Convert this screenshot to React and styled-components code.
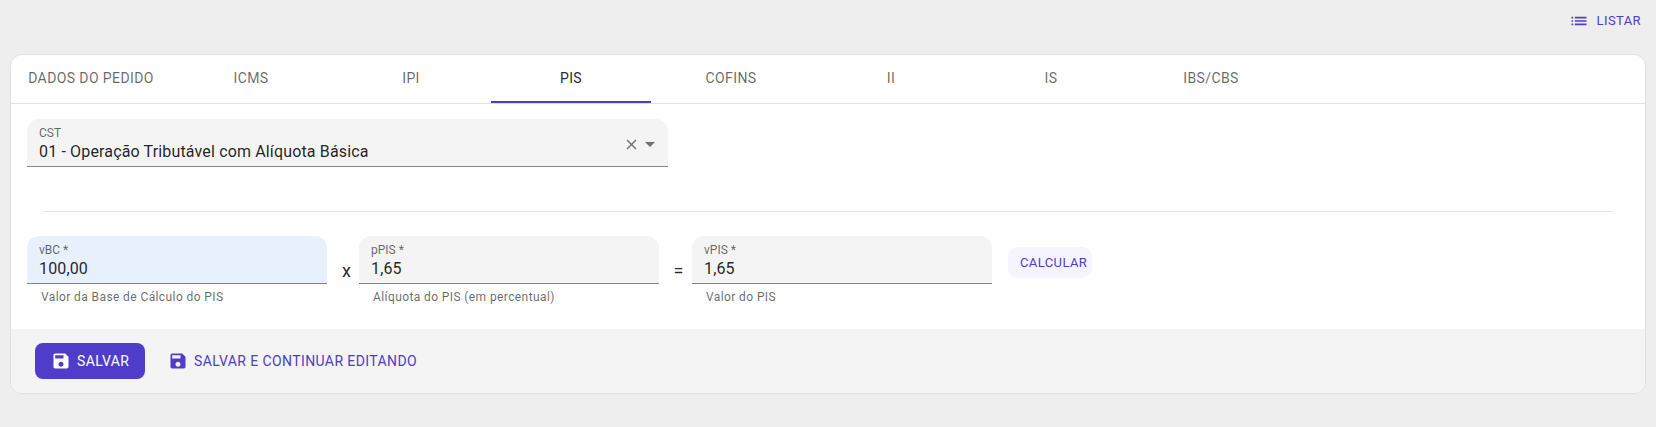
import React from 'react'
import styled, { createGlobalStyle } from 'styled-components'

const purple = '#4f3cc9'

const GlobalStyle = createGlobalStyle`
  html, body {
    margin: 0;
    background-color: #eeeeee;
    font-family: Roboto, "Liberation Sans", sans-serif;
  }
  * { box-sizing: border-box; }
`

const Page = styled.div`
  width: 1656px;
  height: 427px;
  padding: 0 10px 0 10px;
  overflow: hidden;
`

const TopBar = styled.div`
  height: 54px;
  display: flex;
  justify-content: flex-end;
  align-items: flex-start;
  padding: 9px 5px 0 0;
`

const TextButton = styled.div`
  display: flex;
  align-items: center;
  gap: ${props => props.$gap}px;
  color: ${purple};
  font-size: ${props => props.$size}px;
  line-height: 24px;
  letter-spacing: ${props => props.$spacing}px;
  text-transform: uppercase;
`

const Card = styled.div`
  width: 1636px;
  height: 340px;
  background-color: #fff;
  border: 1px solid #e0e0e0;
  border-radius: 12px;
  overflow: hidden;
  display: flex;
  flex-direction: column;
`

const TabBar = styled.div`
  height: 49px;
  flex-shrink: 0;
  display: flex;
  border-bottom: 1px solid #e0e0e0;
`

const Tab = styled.div`
  width: 160px;
  height: 48px;
  display: flex;
  align-items: center;
  justify-content: center;
  font-size: 14px;
  letter-spacing: 0.4px;
  text-transform: uppercase;
  color: ${props => (props.$active ? 'rgba(0,0,0,0.87)' : 'rgba(0,0,0,0.6)')};
  border-bottom: 2px solid ${props => (props.$active ? purple : 'transparent')};
`

const Body = styled.div`
  flex: 1;
  padding: 15px 16px 0 16px;
`

const Field = styled.div`
  width: ${props => props.$width}px;
  height: 48px;
  padding: 8px 12px 0 12px;
  background-color: ${props => (props.$focus ? '#e8f0fe' : '#f4f4f4')};
  border-bottom: 1px solid #858585;
  border-radius: 12px 12px 0 0;
  position: relative;
`

const Label = styled.div`
  font-size: 12px;
  line-height: 13px;
  color: rgba(0,0,0,0.6);
`

const Value = styled.div`
  font-size: 16px;
  line-height: 23px;
  letter-spacing: 0.15px;
  color: rgba(0,0,0,0.87);
`

const SelectIcons = styled.div`
  position: absolute;
  right: 6px;
  top: 13px;
  display: flex;
  align-items: center;
`

const ClearSlot = styled.span`
  display: flex;
  margin: 1px -2px 0 0;
`

const Divider = styled.div`
  height: 1px;
  margin: 44px 16px 24px 16px;
  background-color: #e0e0e0;
`

const CalcRow = styled.div`
  display: flex;
  align-items: flex-start;
`

const Operator = styled.div`
  width: ${props => props.$width}px;
  padding: 23px 0 0 ${props => props.$pad}px;
  text-align: center;
  font-size: 18px;
  line-height: 24px;
  color: rgba(0,0,0,0.87);
`

const Helper = styled.div`
  font-size: 12px;
  line-height: 16px;
  margin-top: 5px;
  padding-left: 14px;
  letter-spacing: 0.4px;
  color: rgba(0,0,0,0.6);
`

const CalcButton = styled.div`
  margin: 11px 0 0 16px;
  width: 84px;
  height: 31px;
  padding-left: 12px;
  display: flex;
  align-items: center;
  border-radius: 10px;
  background-color: #f6f5fd;
  color: ${purple};
  font-size: 13px;
  letter-spacing: 0.4px;
`

const Footer = styled.div`
  flex: 0 0 64px;
  padding: 14px 24px;
  background-color: #f4f4f4;
  display: flex;
  align-items: flex-start;
  gap: 23px;
`

const SaveButton = styled.div`
  width: 110px;
  height: 36px;
  padding-left: 16px;
  display: flex;
  align-items: center;
  gap: 6px;
  border-radius: 8px;
  background-color: ${purple};
  color: #fff;
  font-size: 14px;
  letter-spacing: 0.4px;
`

const SaveLink = styled(TextButton)`
  height: 36px;
`

const Save = () => (
  <svg width="20" height="20" viewBox="0 0 24 24" fill="currentColor">
    <path d="M17 3H5c-1.11 0-2 .9-2 2v14c0 1.1.89 2 2 2h14c1.1 0 2-.9 2-2V7l-4-4zm-5 16c-1.66 0-3-1.34-3-3s1.34-3 3-3 3 1.34 3 3-1.34 3-3 3zm3-10H5V5h10v4z" />
  </svg>
)

const ListIcon = () => (
  <svg width="20" height="20" viewBox="0 0 24 24" fill={purple}>
    <path d="M3 13h2v-2H3v2zm0 4h2v-2H3v2zm0-8h2V7H3v2zm4 4h14v-2H7v2zm0 4h14v-2H7v2zM7 7v2h14V7H7z" />
  </svg>
)

const CloseIcon = () => (
  <svg width="17" height="17" viewBox="0 0 24 24" fill="rgba(0,0,0,0.54)">
    <path d="M19 6.41 17.59 5 12 10.59 6.41 5 5 6.41 10.59 12 5 17.59 6.41 19 12 13.41 17.59 19 19 17.59 13.41 12z" />
  </svg>
)

const ArrowIcon = () => (
  <svg width="24" height="24" viewBox="0 0 24 24" fill="rgba(0,0,0,0.54)">
    <path d="M7 10l5 5 5-5z" />
  </svg>
)

const tabs = ['Dados do pedido', 'ICMS', 'IPI', 'PIS', 'COFINS', 'II', 'IS', 'IBS/CBS']

const App = () => (
  <Page>
    <GlobalStyle />
    <TopBar>
      <TextButton $size={13} $spacing={0.4} $gap={8}>
        <ListIcon />
        Listar
      </TextButton>
    </TopBar>
    <Card>
      <TabBar>
        {tabs.map(tab => <Tab key={tab} $active={tab === 'PIS'}>{tab}</Tab>)}
      </TabBar>
      <Body>
        <Field $width={641}>
          <Label>CST</Label>
          <Value>01 - Operação Tributável com Alíquota Básica</Value>
          <SelectIcons><ClearSlot><CloseIcon /></ClearSlot><ArrowIcon /></SelectIcons>
        </Field>
        <Divider />
        <CalcRow>
          <div>
            <Field $width={300} $focus>
              <Label>vBC *</Label>
              <Value>100,00</Value>
            </Field>
            <Helper>Valor da Base de Cálculo do PIS</Helper>
          </div>
          <Operator $width={32} $pad={7}>x</Operator>
          <div>
            <Field $width={300}>
              <Label>pPIS *</Label>
              <Value>1,65</Value>
            </Field>
            <Helper>Alíquota do PIS (em percentual)</Helper>
          </div>
          <Operator $width={33} $pad={6}>=</Operator>
          <div>
            <Field $width={300}>
              <Label>vPIS *</Label>
              <Value>1,65</Value>
            </Field>
            <Helper>Valor do PIS</Helper>
          </div>
          <CalcButton>CALCULAR</CalcButton>
        </CalcRow>
      </Body>
      <Footer>
        <SaveButton><Save />SALVAR</SaveButton>
        <SaveLink $size={14} $spacing={0.4} $gap={6}><Save />Salvar e continuar editando</SaveLink>
      </Footer>
    </Card>
  </Page>
)

export default App
